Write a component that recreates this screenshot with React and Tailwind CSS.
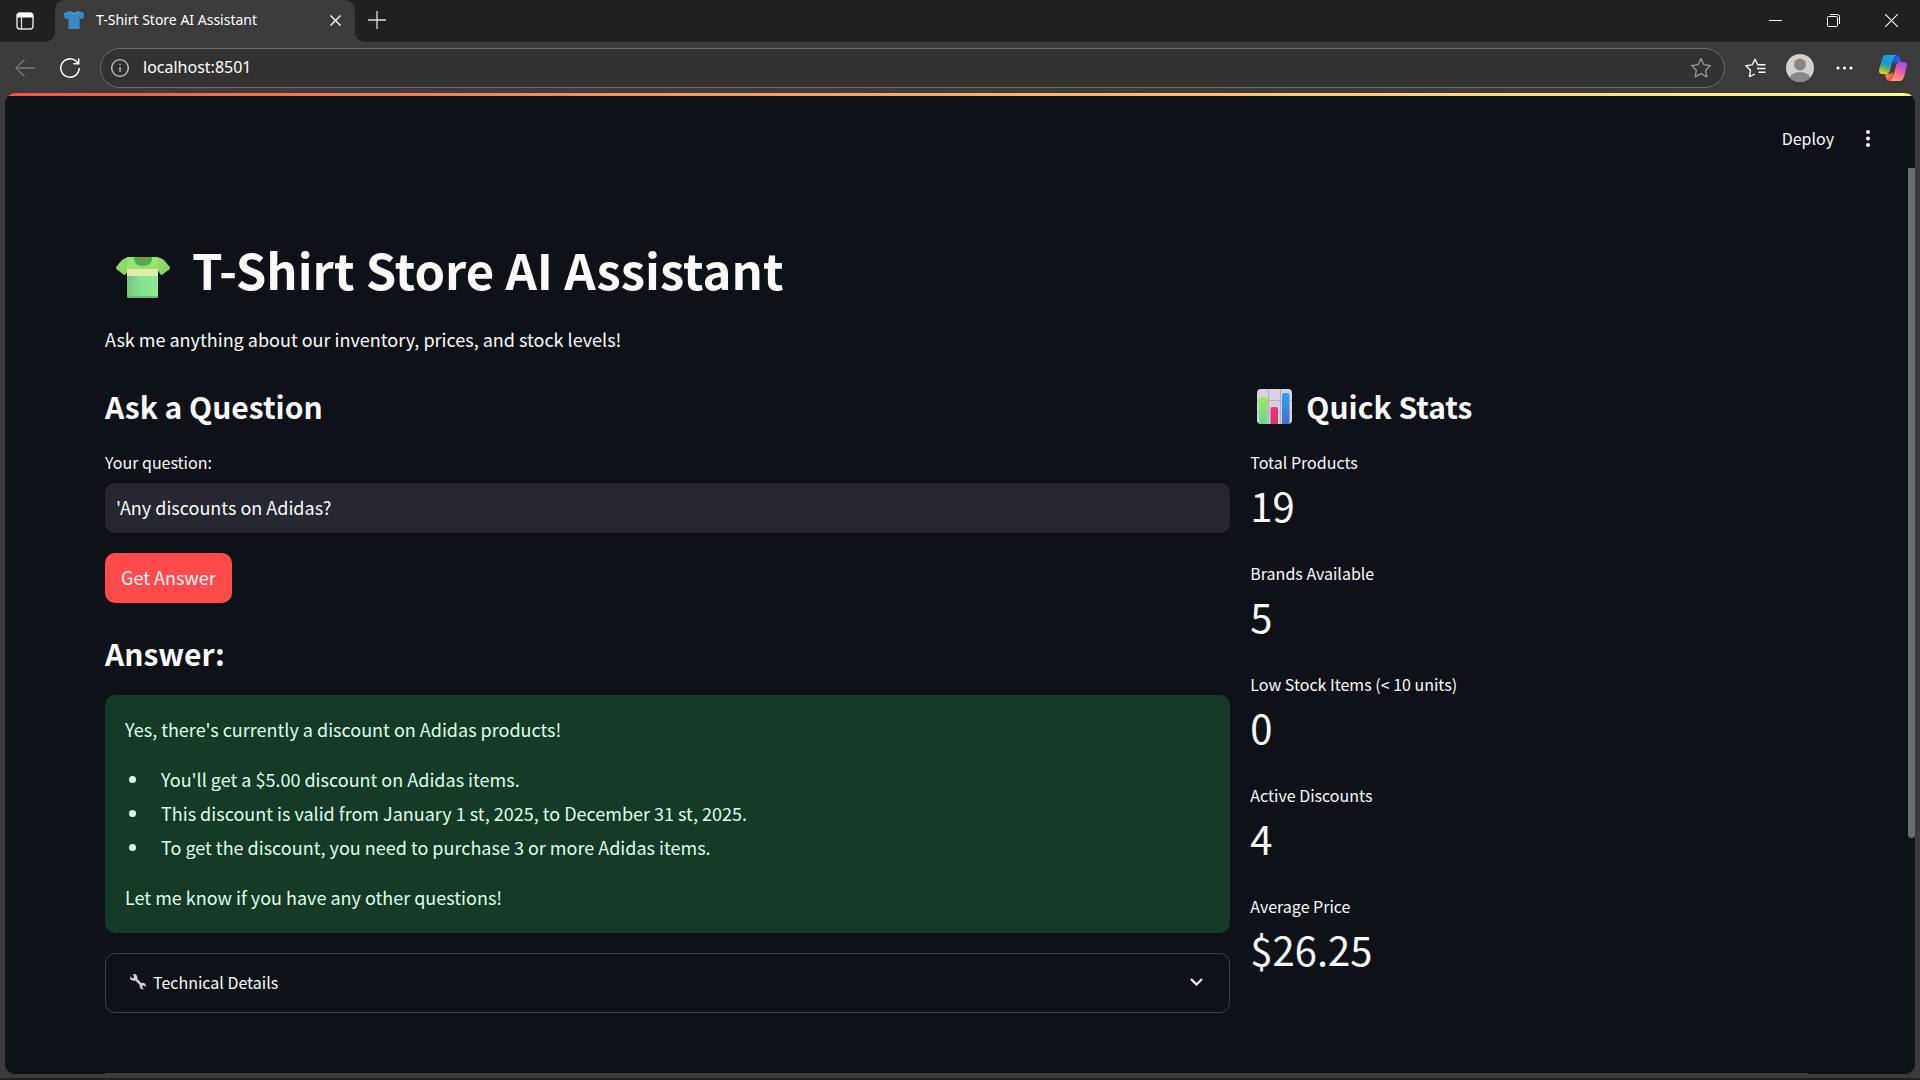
import { useState } from "react";

const stats = [
  { label: "Total Products", value: "19" },
  { label: "Brands Available", value: "5" },
  { label: "Low Stock Items (< 10 units)", value: "0" },
  { label: "Active Discounts", value: "4" },
  { label: "Average Price", value: "$26.25" },
];

const points = [
  "You'll get a $5.00 discount on Adidas items.",
  "This discount is valid from January 1 st, 2025, to December 31 st, 2025.",
  "To get the discount, you need to purchase 3 or more Adidas items.",
];

function TabActionsIcon() {
  return (
    <svg className="size-[18px]" viewBox="0 0 18 18" fill="none" aria-hidden="true">
      <rect x="1" y="1" width="16" height="16" rx="3" stroke="#e4e4e4" strokeWidth="1.4" />
      <path d="M1 4a3 3 0 0 1 3-3h10a3 3 0 0 1 3 3v1.5H1z" fill="#fff" />
      <path d="M5.5 5v12" stroke="#e4e4e4" strokeWidth="1.2" />
    </svg>
  );
}

function BlueShirt() {
  return (
    <svg className="h-[18px] w-5 shrink-0" viewBox="0 0 20 18" aria-hidden="true">
      <path
        d="M6 0 1.2 1.6Q.2 2 0 3l.6 4.6 3.8.6V17q0 1 1 1h9.200q1 0 1-1V8.200l3.800-.6L20 3q-.2-1-1.200-1.400L14 0q-1.500 1.600-4 1.600T6 0z"
        fill="#3b88c3"
      />
      <path d="M6 .3Q7.500 2.500 10 2.500T14 .3" fill="none" stroke="#5fa8dc" strokeWidth="1" />
      <path d="M4.400 8.200 4 4.500M15.600 8.200l.4-3.700" stroke="#2d6fa8" strokeWidth=".6" />
    </svg>
  );
}

function GreenShirt() {
  return (
    <svg className="mt-4 h-[41px] w-[54px] shrink-0" viewBox="0 0 54 41" aria-hidden="true">
      <defs>
        <linearGradient id="teeBody" x1="0" x2="1">
          <stop offset="0" stopColor="#76c47c" />
          <stop offset=".45" stopColor="#86e48f" />
          <stop offset="1" stopColor="#88ec93" />
        </linearGradient>
        <linearGradient id="teeSleeve" x1="0" x2="1" y1="0" y2="1">
          <stop offset="0" stopColor="#9fdc6c" />
          <stop offset="1" stopColor="#80cf60" />
        </linearGradient>
      </defs>
      <path d="M14 0Q9 .3 6 3L.2 10q-.6 1.200.5 2.200l7 5.600q1.200.6 2-.6L13 12z" fill="url(#teeSleeve)" />
      <path d="M40 0q5 .3 8 3l5.800 7q.6 1.200-.5 2.200l-7 5.600q-1.200.6-2-.6L41 12z" fill="url(#teeSleeve)" />
      <path d="M11 0h31v39q0 2-2 2H13q-2 0-2-2z" fill="url(#teeBody)" />
      <path d="M11 0h31v12H11z" fill="#98e470" />
      <path d="M11 12h31v7H11z" fill="#e0ecaa" />
      <path d="M11 39h31q0 2-2 2H13q-2 0-2-2z" fill="#68bd7b" />
      <path d="M19 0q0 8 8 8t8-8z" fill="#769f35" />
      <path d="M19 0q0 8 8 8t8-8" fill="none" stroke="#35b870" strokeWidth="2.400" />
    </svg>
  );
}

function ChartEmoji() {
  return (
    <svg className="size-[35px] shrink-0" viewBox="0 0 35 35" aria-hidden="true">
      <defs>
        <linearGradient id="barGreen" x2="0" y2="1">
          <stop stopColor="#a5e65b" />
          <stop offset="1" stopColor="#5fdb94" />
        </linearGradient>
        <linearGradient id="barPink" x2="0" y2="1">
          <stop stopColor="#f0308c" />
          <stop offset="1" stopColor="#d8385f" />
        </linearGradient>
        <linearGradient id="barBlue" x2="0" y2="1">
          <stop stopColor="#2fa4f5" />
          <stop offset="1" stopColor="#4070c4" />
        </linearGradient>
      </defs>
      <rect width="35" height="35" rx="4" fill="#d9d2e1" />
      <path d="M11.500 0v35M23.500 0v35M0 11.500h35M0 23.500h35" stroke="#b7adbf" strokeWidth="1.200" />
      <path d="M2 35V10q0-2 2-2h4.500q2 0 2 2v25z" fill="url(#barGreen)" />
      <path d="M13.500 35V20q0-2 2-2h3.500q2 0 2 2v15z" fill="url(#barPink)" />
      <path d="M25 35V6q0-2 2-2h3.500q2 0 2 2v29z" fill="url(#barBlue)" />
    </svg>
  );
}

function Wrench() {
  return (
    <svg className="size-4 shrink-0" viewBox="0 0 16 16" aria-hidden="true">
      <path
        d="M3 0q3-.3 4 2t.2 3l4.300 4.200q2-.9 3.500.6 1.300 1.400.9 3.200l-2-1.600-1.500.4-.2 1.600 1.600 1.600q-2 .6-3.400-.8-1.300-1.500-.6-3.300L5.300 6.600q-1.900.7-3.900-.5T.1 2.600l2.100 1.600 1.500-.3.200-1.500z"
        fill="#d9cfe6"
      />
    </svg>
  );
}

function CopilotLogo() {
  return (
    <svg className="h-[26px] w-7" viewBox="0 0 28 26" aria-hidden="true">
      <defs>
        <linearGradient id="cpLeft" x1=".6" y1="0" x2=".3" y2="1">
          <stop stopColor="#19a7ee" />
          <stop offset=".4" stopColor="#2192d8" />
          <stop offset=".68" stopColor="#4fb56b" />
          <stop offset="1" stopColor="#f2cf13" />
        </linearGradient>
        <linearGradient id="cpRight" x1=".7" y1="0" x2=".3" y2="1">
          <stop stopColor="#a04bf0" />
          <stop offset=".5" stopColor="#ee5fa0" />
          <stop offset="1" stopColor="#ffa26b" />
        </linearGradient>
        <linearGradient id="cpTop" x2="1" y2="1">
          <stop stopColor="#1a50d8" />
          <stop offset="1" stopColor="#2374e0" />
        </linearGradient>
        <linearGradient id="cpBottom" x2="1" y2="1">
          <stop stopColor="#f9a03c" />
          <stop offset="1" stopColor="#ea3a4e" />
        </linearGradient>
      </defs>
      <path d="M13 0h4.500q2.600 0 3.400 2.500L22.200 7H18q-2.500 0-3.300 2.600z" fill="url(#cpTop)" />
      <path d="M15 26h-4.500q-2.600 0-3.400-2.500L6 19h4q2.500 0 3.300-2.600z" fill="url(#cpBottom)" />
      <path d="M7.500 0H17q-1.800.4-2.600 3l-3.700 13q-.8 3-3.700 3H3.500Q-.8 19 .2 14.500L3 4Q4.200 0 7.500 0z" fill="url(#cpLeft)" />
      <path d="M20.500 26H11q1.800-.4 2.600-3l3.700-13q.8-3 3.700-3h3.500q4.300 0 3.300 4.500L25 22q-1.200 4-4.500 4z" fill="url(#cpRight)" />
    </svg>
  );
}

const starPath = "M10 1.500l2.600 5.500 6 .8-4.400 4.200 1.100 6L10 15.100 4.700 18l1.100-6L1.400 7.800l6-.8z";

function TitleBar() {
  return (
    <div className="flex h-[42px] shrink-0 bg-[#202020] text-white">
      <div className="w-[55px] bg-[#3b3b3b]">
        <button aria-label="Tab actions" className="flex h-full w-full items-center rounded-br-[10px] bg-[#202020] pl-4">
          <TabActionsIcon />
        </button>
      </div>
      <div className="flex w-[300px] items-center rounded-t-[10px] bg-[#3b3b3b] pr-[10px] pb-[2px] pl-[9px]">
        <BlueShirt />
        <span className="ml-3 flex-1 font-['Noto_Sans',sans-serif] text-sm whitespace-nowrap">
          T-Shirt Store AI Assistant
        </span>
        <button aria-label="Close tab" className="flex size-5 items-center justify-center">
          <svg className="size-[11px]" viewBox="0 0 11 11" stroke="#fff" strokeWidth="1.400" aria-hidden="true">
            <path d="M.5.5l10 10M10.500.5l-10 10" />
          </svg>
        </button>
      </div>
      <div className="flex-1 bg-[#3b3b3b]">
        <div className="flex h-full items-center rounded-bl-[10px] bg-[#202020] pb-[2px] pl-[13px]">
          <button aria-label="New tab">
            <svg className="size-[18px]" viewBox="0 0 18 18" stroke="#ddd" strokeWidth="1.300" aria-hidden="true">
              <path d="M9 0v18M0 9h18" />
            </svg>
          </button>
          <div className="ml-auto flex h-full">
            <button aria-label="Minimize" className="flex w-[58px] items-center justify-center">
              <svg className="size-[13px]" viewBox="0 0 13 13" stroke="#fff" aria-hidden="true">
                <path d="M0 6.500h13" />
              </svg>
            </button>
            <button aria-label="Restore" className="flex w-[58px] items-center justify-center">
              <svg className="size-[13px]" viewBox="0 0 13 13" fill="none" stroke="#fff" aria-hidden="true">
                <rect x=".5" y="2.500" width="10" height="10" rx="1" />
                <path d="M3 .5h7.500a2 2 0 0 1 2 2V10" />
              </svg>
            </button>
            <button aria-label="Close" className="flex w-[58px] items-center justify-center">
              <svg className="size-[13px]" viewBox="0 0 13 13" stroke="#fff" strokeWidth="1.100" aria-hidden="true">
                <path d="M0 0l13 13M13 0 0 13" />
              </svg>
            </button>
          </div>
        </div>
      </div>
    </div>
  );
}

function Toolbar() {
  return (
    <div className="flex h-[51px] shrink-0 items-center bg-[#3b3b3b] pr-[13px] pl-[15px]">
      <button aria-label="Back" className="mr-[25px]">
        <svg className="h-[18px] w-5" viewBox="0 0 20 18" fill="none" stroke="#777" strokeWidth="1.300" aria-hidden="true">
          <path d="M20 9H1M9.500.5 1 9l8.500 8.500" />
        </svg>
      </button>
      <button aria-label="Refresh" className="mr-5">
        <svg className="size-5" viewBox="0 0 20 20" fill="none" stroke="#fff" strokeWidth="1.500" aria-hidden="true">
          <path d="M19.200 10A9.200 9.200 0 1 1 16.500 3.500L18.500 5.500" />
          <path d="M18.700.5v5.300h-5.300" />
        </svg>
      </button>
      <div className="flex h-10 flex-1 items-center rounded-full border border-[#696969] bg-[#323232] pr-3 pl-[10px]">
        <svg className="size-[18px] shrink-0" viewBox="0 0 18 18" fill="none" stroke="#ccc" strokeWidth="1.300" aria-hidden="true">
          <circle cx="9" cy="9" r="8.300" />
          <path d="M9 8v5M9 4.800v1.500" />
        </svg>
        <input
          aria-label="Address"
          defaultValue="localhost:8501"
          className="ml-[14px] min-w-0 flex-1 bg-transparent pb-px font-['Noto_Sans',sans-serif] text-base text-white outline-none"
        />
        <button aria-label="Add to favorites">
          <svg className="size-[22px]" viewBox="0 0 20 20" fill="none" stroke="#9a9a9a" strokeWidth="1.200" strokeLinejoin="round" aria-hidden="true">
            <path d={starPath} />
          </svg>
        </button>
      </div>
      <button aria-label="Favorites" className="ml-5">
        <svg className="h-5 w-[21px]" viewBox="0 0 21 20" fill="none" stroke="#fff" strokeWidth="1.300" strokeLinejoin="round" aria-hidden="true">
          <path d="M12.700 6.800 10 1.200 7.300 6.800.8 7.700l4.700 4.600-1.100 6.400L9.800 16M12.700 6.800l.5.1" />
          <path d="M13 6.800h7.500M12 10.500h8.500M13.500 14.300h7" strokeWidth="1.400" />
        </svg>
      </button>
      <button aria-label="Profile" className="ml-5 rounded-full">
        <svg className="size-7" viewBox="0 0 28 28" aria-hidden="true">
          <clipPath id="avatarClip">
            <circle cx="14" cy="14" r="14" />
          </clipPath>
          <circle cx="14" cy="14" r="14" fill="#d2d0ce" />
          <circle cx="14" cy="10.500" r="6" fill="#8a8684" />
          <ellipse cx="14" cy="26" rx="11" ry="8" fill="#8a8684" clipPath="url(#avatarClip)" />
        </svg>
      </button>
      <button aria-label="Settings and more" className="ml-[22px]">
        <svg className="h-1 w-[17px]" viewBox="0 0 17 4" fill="#fff" aria-hidden="true">
          <circle cx="2" cy="2" r="1.600" />
          <circle cx="8.500" cy="2" r="1.600" />
          <circle cx="15" cy="2" r="1.600" />
        </svg>
      </button>
      <button aria-label="Copilot" className="ml-[26px]">
        <CopilotLogo />
      </button>
    </div>
  );
}

export default function App() {
  const [question, setQuestion] = useState("'Any discounts on Adidas?");
  return (
    <div className="flex h-screen flex-col overflow-hidden bg-[#202020]">
      <TitleBar />
      <Toolbar />
      <div className="mb-[2px] flex min-h-0 flex-1 bg-[#3b3b3b] px-[5px] pb-1">
        <div className="flex min-w-0 flex-1 flex-col overflow-hidden rounded-[10px] bg-[#0e1117] font-['Noto_Sans_CJK_SC',sans-serif] text-[#fafafa]">
          <div className="h-[3px] shrink-0 bg-linear-to-r from-[#ff4b4b] to-[#fffd80]" />
          <div className="flex min-h-0 flex-1">
            <div className="min-w-0 flex-1 overflow-hidden">
              <header className="flex h-[85px] items-center justify-end gap-8 pr-[38px]">
                <button className="pb-[2px] text-base leading-6">Deploy</button>
                <button aria-label="Main menu">
                  <svg className="h-[17px] w-1" viewBox="0 0 4 17" fill="#fafafa" aria-hidden="true">
                    <circle cx="2" cy="2" r="2" />
                    <circle cx="2" cy="8.500" r="2" />
                    <circle cx="2" cy="15" r="2" />
                  </svg>
                </button>
              </header>
              <main className="px-[100px] pt-8">
                <h1 className="flex items-center gap-[22px] pt-[23px] pb-[21px] pl-[11px] text-[49px] leading-[66px] font-bold">
                  <GreenShirt />
                  T-Shirt Store AI Assistant
                </h1>
                <p className="text-lg leading-8">Ask me anything about our inventory, prices, and stock levels!</p>
                <div className="mt-[21px] flex gap-5">
                  <section className="min-w-0 grow basis-[calc(66.666%-20px)]">
                    <h2 className="pt-[9px] pb-[21px] text-3xl leading-[42px] font-bold">Ask a Question</h2>
                    <form onSubmit={(e) => e.preventDefault()}>
                      <label htmlFor="question" className="mb-[7px] block text-base leading-7">
                        Your question:
                      </label>
                      <input
                        id="question"
                        value={question}
                        onChange={(e) => setQuestion(e.target.value)}
                        className="block h-[50px] w-full rounded-[10px] bg-[#262730] px-[11px] pb-[2px] text-lg outline-none"
                      />
                      <button className="mt-5 block h-[50px] rounded-[10px] bg-[#ff4b4b] px-4 pb-[2px] text-lg">
                        Get Answer
                      </button>
                    </form>
                    <h2 className="mt-5 pt-[9px] pb-[21px] text-3xl leading-[42px] font-bold">Answer:</h2>
                    <div className="rounded-[10px] bg-[#173928] px-5 pt-[18px] pb-5 text-lg leading-8 text-[#dffde9]">
                      <p>Yes, there's currently a discount on Adidas products!</p>
                      <ul className="my-[17px]">
                        {points.map((point) => (
                          <li key={point} className="flex items-center gap-[25px] pl-1 leading-[34px]">
                            <span className="size-[7px] shrink-0 rounded-full bg-[#dffde9]" />
                            {point}
                          </li>
                        ))}
                      </ul>
                      <p>Let me know if you have any other questions!</p>
                    </div>
                    <button
                      aria-expanded="false"
                      className="mt-5 flex h-[60px] w-full items-center rounded-[10px] border border-[#3d3f44] pr-[26px] pb-[2px] pl-6 text-base"
                    >
                      <Wrench />
                      <span className="ml-[7px]">Technical Details</span>
                      <svg
                        className="ml-auto h-2 w-[13px]"
                        viewBox="0 0 13 8"
                        fill="none"
                        stroke="#fafafa"
                        strokeWidth="2.200"
                        aria-hidden="true"
                      >
                        <path d="M1 1l5.500 5.500L12 1" />
                      </svg>
                    </button>
                  </section>
                  <section className="min-w-0 grow basis-[calc(33.333%-20px)]">
                    <h2 className="flex items-center gap-[14px] pt-[9px] pb-[21px] pl-[7px] text-3xl leading-[42px] font-bold">
                      <ChartEmoji />
                      Quick Stats
                    </h2>
                    <dl className="flex flex-col gap-5">
                      {stats.map((stat) => (
                        <div key={stat.label}>
                          <dt className="text-base leading-7">{stat.label}</dt>
                          <dd className="pb-1 text-[40px] leading-[59px]">{stat.value}</dd>
                        </div>
                      ))}
                    </dl>
                  </section>
                </div>
                <hr className="mt-[60px] border-[#3d3f44]" />
              </main>
            </div>
            <div className="w-[7px] shrink-0 pt-[72px]">
              <div className="h-[74%] rounded-b-full bg-[#6b6c70]" />
            </div>
          </div>
        </div>
      </div>
    </div>
  );
}
